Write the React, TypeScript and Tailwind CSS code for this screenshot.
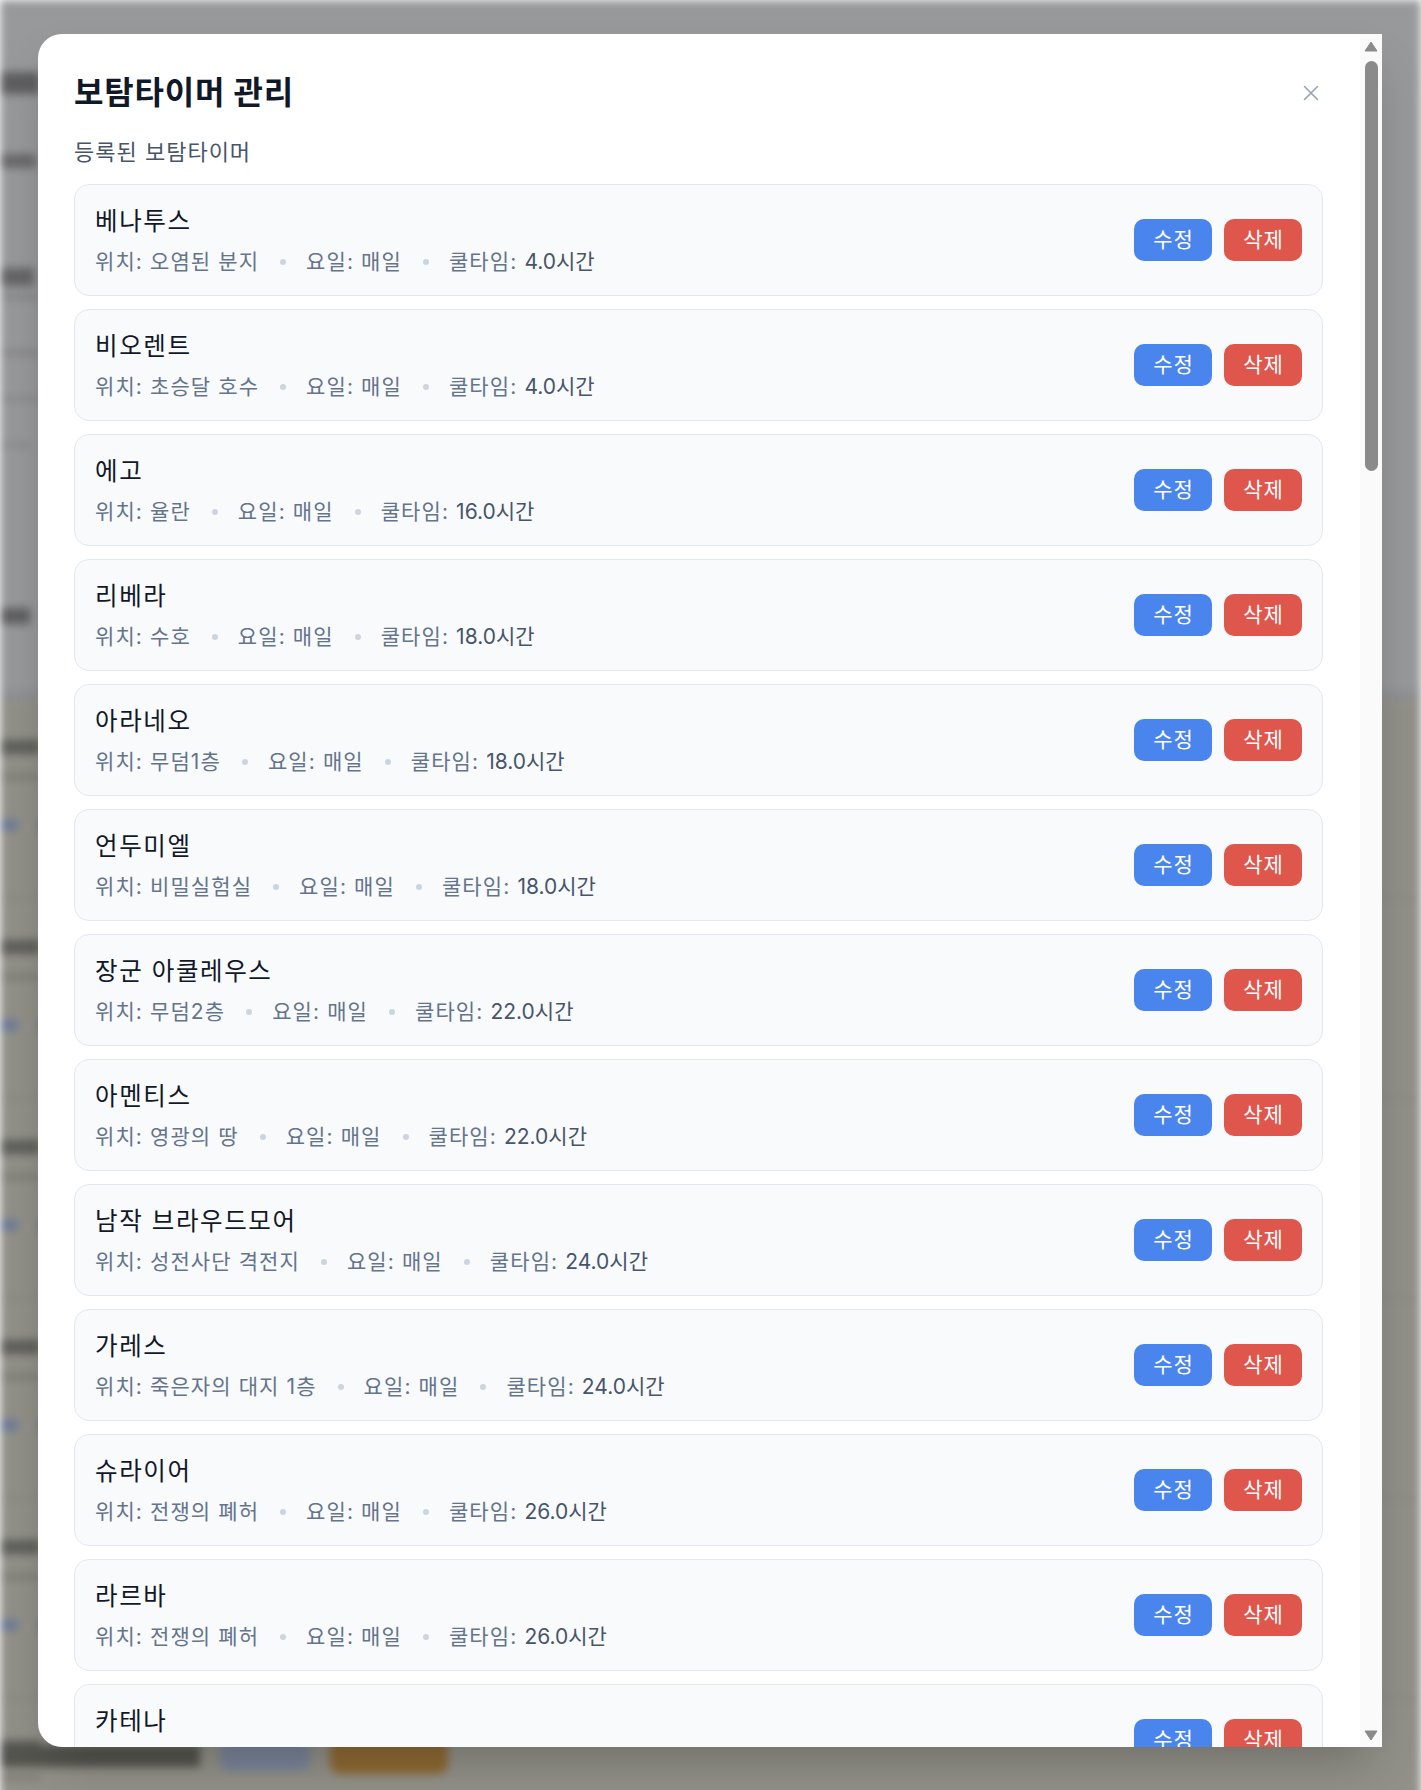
import React from 'react';

type Boss = {
  name: string;
  location: string;
  day: string;
  cooldown: string;
};

const bosses: Boss[] = [
  { name: '베나투스', location: '오염된 분지', day: '매일', cooldown: '4.0시간' },
  { name: '비오렌트', location: '초승달 호수', day: '매일', cooldown: '4.0시간' },
  { name: '에고', location: '율란', day: '매일', cooldown: '16.0시간' },
  { name: '리베라', location: '수호', day: '매일', cooldown: '18.0시간' },
  { name: '아라네오', location: '무덤1층', day: '매일', cooldown: '18.0시간' },
  { name: '언두미엘', location: '비밀실험실', day: '매일', cooldown: '18.0시간' },
  { name: '장군 아쿨레우스', location: '무덤2층', day: '매일', cooldown: '22.0시간' },
  { name: '아멘티스', location: '영광의 땅', day: '매일', cooldown: '22.0시간' },
  { name: '남작 브라우드모어', location: '성전사단 격전지', day: '매일', cooldown: '24.0시간' },
  { name: '가레스', location: '죽은자의 대지 1층', day: '매일', cooldown: '24.0시간' },
  { name: '슈라이어', location: '전쟁의 폐허', day: '매일', cooldown: '26.0시간' },
  { name: '라르바', location: '전쟁의 폐허', day: '매일', cooldown: '26.0시간' },
  { name: '카테나', location: '전쟁의 폐허', day: '매일', cooldown: '26.0시간' },
];

// blurred page behind the dialog
const Backdrop = () => {
  const cards = [0, 1, 2, 3, 4, 5];
  return (
    <div className="absolute inset-0 bg-[#98999b] blur-[4px]">
      <div className="flex flex-col">
        <div className="h-[700px] flex flex-col pt-[72px]">
          <div className="w-[40px] h-[22px] bg-[#5f5f62] mb-[60px]" />
          <div className="w-[36px] h-[14px] bg-[#6a6a6d] mb-[100px]" />
          <div className="w-[34px] h-[18px] bg-[#666669] mb-[8px]" />
          <div className="w-[40px] h-[6px] bg-[#88888b] mb-[50px]" />
          <div className="w-[40px] h-[6px] bg-[#88888b] mb-[40px]" />
          <div className="w-[40px] h-[6px] bg-[#8c8c8f] mb-[40px]" />
          <div className="w-[30px] h-[6px] bg-[#8c8c8f] mb-[160px]" />
          <div className="w-[30px] h-[16px] bg-[#606063]" />
          <div className="mt-auto h-[10px] bg-[#909194]" />
        </div>
        {cards.map((c) => (
          <div key={c} className="h-[200px] border-b-[3px] border-[#8a8981] bg-[#929189] flex flex-col pt-[40px]">
            <div className="w-[40px] h-[14px] bg-[#5f5f5c] mb-[20px]" />
            <div className="w-[40px] h-[6px] bg-[#7e7d76] mb-[40px]" />
            <div className="flex gap-[20px]">
              <div className="w-[18px] h-[10px] bg-[#6b7a9a]" />
              <div className="w-[18px] h-[10px] bg-[#6b7a9a]" />
            </div>
          </div>
        ))}
      </div>
      <div className="absolute left-0 top-[1738px] flex items-center gap-[20px]">
        <div className="w-[200px] h-[22px] bg-[#55554f]" />
        <div className="w-[90px] h-[30px] rounded-[10px] bg-[#7a8599]" />
        <div className="w-[118px] h-[36px] rounded-[10px] bg-[#8f6a33]" />
      </div>
    </div>
  );
};

const BossCard = ({ boss }: { boss: Boss }) => (
  <div className="flex items-center justify-between rounded-[15px] border border-[#e2e8f0] bg-[#f8fafc] px-[20px] pt-[19px] pb-[19px] shrink-0">
    <div className="flex flex-col">
      <div className="text-[24.5px] leading-[34px] tracking-[1.6px] text-[#111827] whitespace-nowrap">{boss.name}</div>
      <div className="mt-[10px] flex items-center text-[21px] leading-[28px] tracking-[1.1px] text-[#64748b] whitespace-nowrap">
        <span>위치: {boss.location}</span>
        <span className="ml-[21px] mr-[20px] w-[6px] h-[6px] rounded-full bg-[#cbd5e1]" />
        <span>요일: {boss.day}</span>
        <span className="ml-[21px] mr-[20px] w-[6px] h-[6px] rounded-full bg-[#cbd5e1]" />
        <span>
          쿨타임: <span className="tracking-normal text-[#475569]">{boss.cooldown}</span>
        </span>
      </div>
    </div>
    <div className="flex items-center gap-[12px]">
      <button className="w-[78px] h-[42px] rounded-[10px] bg-[#4a85ee] pl-[1px] text-white text-[21px] leading-[28px] tracking-[1px]">
        수정
      </button>
      <button className="w-[78px] h-[42px] rounded-[10px] bg-[#df564c] pl-[1px] text-white text-[21px] leading-[28px] tracking-[1px]">
        삭제
      </button>
    </div>
  </div>
);

const ScrollBar = () => (
  <div className="w-[22px] shrink-0 bg-[#fafafa] flex flex-col items-center pt-[7px] pb-[6px]">
    <svg width="14" height="11" viewBox="0 0 14 11" className="shrink-0">
      <path d="M7 1 L13 10 L1 10 Z" fill="#8a8a8a" stroke="#8a8a8a" strokeWidth="1" strokeLinejoin="round" />
    </svg>
    <div className="mt-[9px] w-[13px] h-[410px] rounded-full bg-[#8a8a8a]" />
    <div className="flex-1" />
    <svg width="14" height="11" viewBox="0 0 14 11" className="shrink-0">
      <path d="M1 1 L13 1 L7 10 Z" fill="#8a8a8a" stroke="#8a8a8a" strokeWidth="1" strokeLinejoin="round" />
    </svg>
  </div>
);

export default function App() {
  return (
    <div className="relative w-full h-[1790px] overflow-hidden font-['Inter','Noto_Sans_CJK_KR',sans-serif]">
      <Backdrop />
      <div className="absolute left-[38px] top-[34px] w-[1344px] h-[1713px] flex bg-white rounded-l-[24px] overflow-hidden shadow-2xl">
        <div className="flex-1 flex flex-col overflow-hidden pl-[36px] pr-[37px] pt-[39px]">
          <div className="flex items-center justify-between h-[40px] shrink-0">
            <h2 className="text-[32px] leading-[40px] font-bold tracking-[0.8px] text-[#111827]">보탐타이머 관리</h2>
            <button className="w-[25px] h-[25px] flex items-center justify-center text-[#94a3b8]">
              <svg width="16" height="16" viewBox="0 0 16 16" fill="none" stroke="currentColor" strokeWidth="1.6" strokeLinecap="round">
                <path d="M1.5 1.5 L14.5 14.5 M14.5 1.5 L1.5 14.5" />
              </svg>
            </button>
          </div>
          <div className="mt-[25px] text-[22px] leading-[28px] tracking-[1px] text-[#475569] shrink-0">등록된 보탐타이머</div>
          <div className="mt-[18px] flex flex-col gap-[13px]">
            {bosses.map((b) => (
              <BossCard key={b.name} boss={b} />
            ))}
          </div>
        </div>
        <ScrollBar />
      </div>
    </div>
  );
}
